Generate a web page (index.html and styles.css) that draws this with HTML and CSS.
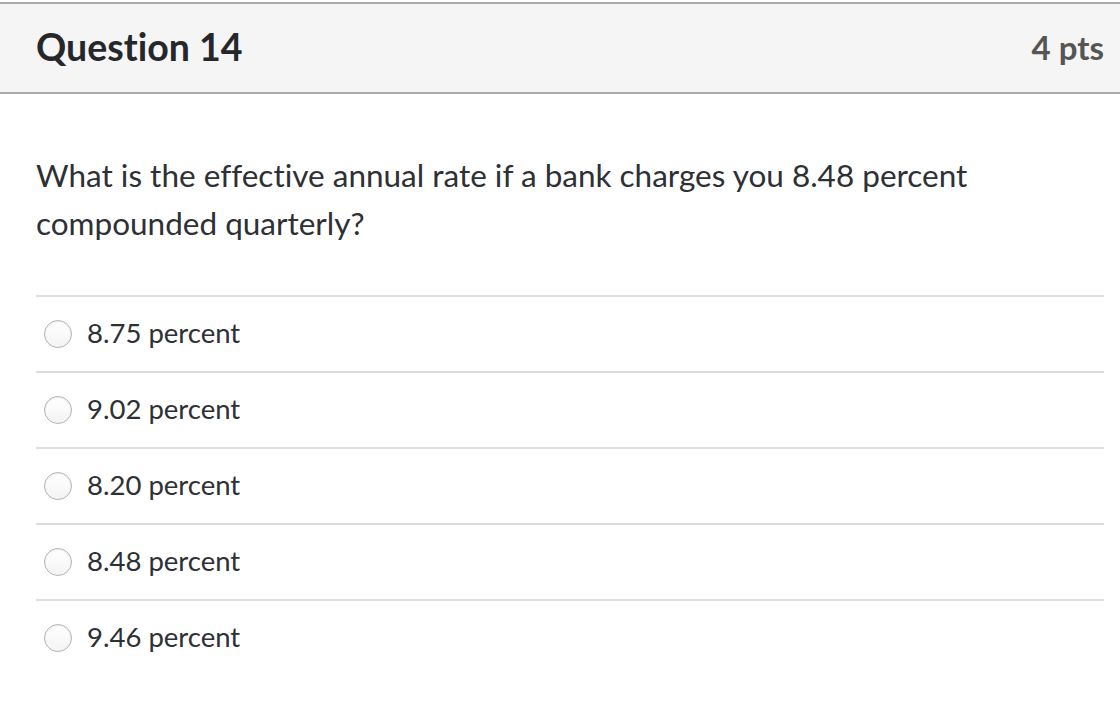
FILE: index.html
```html
<!DOCTYPE html>
<html>
<head>
<meta charset="utf-8">
<link rel="stylesheet" href="styles.css">
</head>
<body>
<div class="question">
  <div class="header">
    <h2 class="title">Question 14</h2>
    <div class="pts">4 pts</div>
  </div>
  <div class="body">
    <p class="text">What is the effective annual rate if a bank charges you 8.48 percent compounded quarterly?</p>
    <div class="answers">
      <label class="answer"><span class="radio"></span><span class="label">8.75 percent</span></label>
      <label class="answer"><span class="radio"></span><span class="label">9.02 percent</span></label>
      <label class="answer"><span class="radio"></span><span class="label">8.20 percent</span></label>
      <label class="answer"><span class="radio"></span><span class="label">8.48 percent</span></label>
      <label class="answer"><span class="radio"></span><span class="label">9.46 percent</span></label>
    </div>
  </div>
</div>
</body>
</html>
```
FILE: styles.css
```css
html, body {
  margin: 0;
  padding: 0;
  background: #fff;
}
body {
  font-family: Lato, "Open Sans", "Liberation Sans", sans-serif;
  font-variant-ligatures: none;
  color: #2b2e33;
}
.question {
  padding-top: 2px;
}
.header {
  display: flex;
  align-items: center;
  justify-content: space-between;
  height: 88px;
  padding: 0 16px 0 36px;
  background: #f5f5f5;
  border-top: 2px solid #aaaaaa;
  border-bottom: 2px solid #aaaaaa;
}
.title {
  margin: 0 0 3px 0;
  font-size: 37.5px;
  font-weight: 700;
  color: #25272b;
}
.pts {
  margin-bottom: 3px;
  font-size: 33px;
  font-weight: 700;
  color: #555555;
}
.body {
  padding: 0 16px 0 36px;
}
.text {
  margin: 0;
  padding-top: 57px;
  width: 1000px;
  font-size: 31.5px;
  line-height: 48px;
  color: #2d3035;
}
.answers {
  margin-top: 48px;
}
.answer {
  display: flex;
  align-items: center;
  height: 74px;
  border-top: 2px solid #dddddd;
}
.radio {
  width: 26px;
  height: 26px;
  margin-left: 8px;
  border: 1px solid #b4b4b4;
  border-radius: 50%;
  background: linear-gradient(#ffffff, #f4f4f4);
  box-shadow: inset 0 1px 2px rgba(0,0,0,0.08);
  flex: none;
}
.label {
  margin-left: 15px;
  margin-bottom: 3px;
  font-size: 27.5px;
  color: #2d3035;
}
```
